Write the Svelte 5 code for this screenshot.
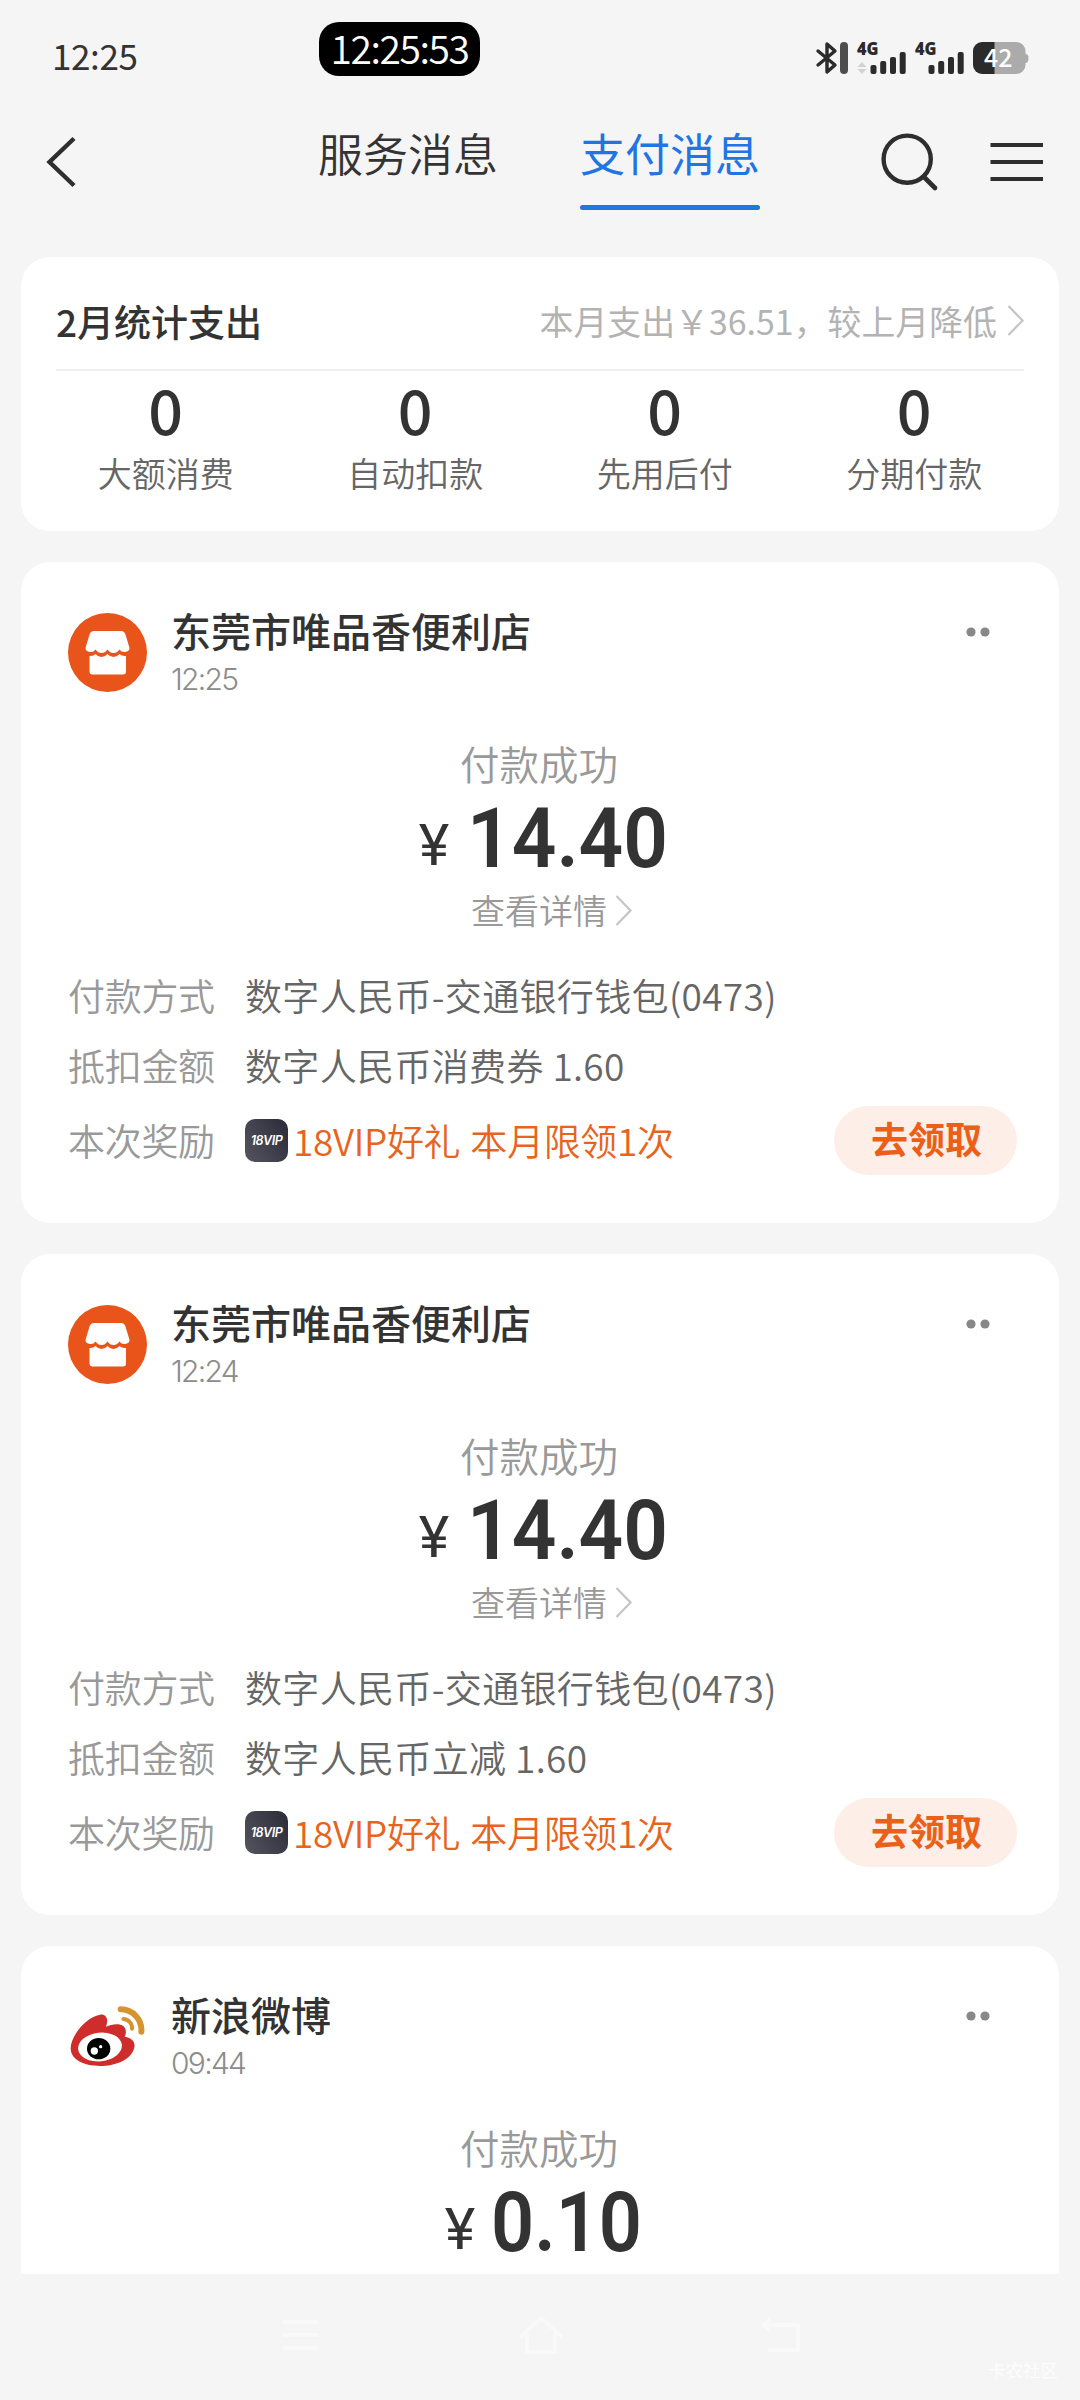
<script lang="ts">
  type Row = { label: string; value: string };
  type Payment = {
    shop: string;
    time: string;
    logo: 'store' | 'weibo';
    amount: string;
    rows: Row[];
    reward?: string;
  };

  const stats = ['大额消费', '自动扣款', '先用后付', '分期付款'];

  const payments: Payment[] = [
    {
      shop: '东莞市唯品香便利店',
      time: '12:25',
      logo: 'store',
      amount: '14.40',
      rows: [
        { label: '付款方式', value: '数字人民币-交通银行钱包(0473)' },
        { label: '抵扣金额', value: '数字人民币消费券 1.60' },
      ],
      reward: '18VIP好礼 本月限领1次',
    },
    {
      shop: '东莞市唯品香便利店',
      time: '12:24',
      logo: 'store',
      amount: '14.40',
      rows: [
        { label: '付款方式', value: '数字人民币-交通银行钱包(0473)' },
        { label: '抵扣金额', value: '数字人民币立减 1.60' },
      ],
      reward: '18VIP好礼 本月限领1次',
    },
    {
      shop: '新浪微博',
      time: '09:44',
      logo: 'weibo',
      amount: '0.10',
      rows: [],
    },
  ];
</script>

{#snippet chevron(cls: string)}
  <svg class={cls} viewBox="0 0 17 31" width="17" height="31">
    <path d="M1.5 1 L15.5 15.5 L1.5 30" fill="none" stroke="currentColor" stroke-width="2.2" />
  </svg>
{/snippet}

{#snippet signal(arrows: boolean)}
  <svg class="signal" viewBox="0 0 50 32" width="50" height="32">
    <text x="0" y="12.5" class="net" textLength="21.5" lengthAdjust="spacingAndGlyphs">4G</text>
    {#if arrows}
      <path d="M0.5 25 L5 20 L9.5 25Z M0.5 27 L5 32 L9.5 27Z" fill="#d2d2d2" />
    {/if}
    <rect x="13.5" y="23" width="6" height="9" rx="2" />
    <rect x="23.2" y="19" width="6" height="13" rx="2" />
    <rect x="33" y="15" width="6" height="17" rx="2" />
    <rect x="42.7" y="10" width="6" height="22" rx="2" />
  </svg>
{/snippet}

<div class="screen">
  <header class="status">
    <span class="clock">12:25</span>
    <span class="pill">12:25:53</span>
    <div class="status-icons">
      <svg class="bluetooth" viewBox="0 0 33 32" width="33" height="32">
        <path d="M2 9 L19 23 L11 30 V2 L19 9 L2 23" fill="none" stroke="#2b2b2b" stroke-width="3.4" stroke-linecap="round" stroke-linejoin="round" />
        <rect x="24" y="0" width="8" height="32" rx="4" fill="#4d4d4d" />
      </svg>
      {@render signal(true)}
      {@render signal(false)}
      <svg class="battery" viewBox="0 0 56 32" width="56" height="32">
        <path d="M9 0 H43.5 A9 9 0 0 1 52.5 9 V12 Q55.5 12 55.5 16 Q55.5 21 52.5 21 V23 A9 9 0 0 1 43.5 32 H9Z" fill="#ababab" />
        <path d="M21.5 0 H9 A9 9 0 0 0 0 9 V23 A9 9 0 0 0 9 32 H21.5Z" fill="#2b2b2b" />
        <text x="11" y="25" class="level" textLength="28.5" lengthAdjust="spacingAndGlyphs">42</text>
      </svg>
    </div>
  </header>

  <nav class="nav">
    <svg class="back" viewBox="0 0 30 50" width="30" height="50">
      <path d="M28 1.5 L3.5 25 L28 48.5" fill="none" stroke="#2e2e2e" stroke-width="4.4" />
    </svg>
    <div class="tabs">
      <span class="tab">服务消息</span>
      <span class="tab active">支付消息</span>
    </div>
    <svg class="search" viewBox="0 0 58 58" width="58" height="58">
      <circle cx="26.2" cy="26.2" r="23.6" fill="none" stroke="#2e2e2e" stroke-width="4.4" />
      <path d="M43 44 L54 55" stroke="#2e2e2e" stroke-width="4.6" stroke-linecap="round" />
    </svg>
    <svg class="menu" viewBox="0 0 53 40" width="53" height="40">
      <path d="M0.5 3 H53 M0.5 20 H53 M0.5 37 H53" stroke="#2e2e2e" stroke-width="4.2" />
    </svg>
  </nav>

  <main class="feed">
    <section class="card summary">
      <div class="summary-head">
        <h2>2月统计支出</h2>
        <span class="month">本月支出￥36.51，较上月降低</span>
        {@render chevron('chev')}
      </div>
      <div class="stats">
        {#each stats as label}
          <div class="stat">
            <strong>0</strong>
            <span>{label}</span>
          </div>
        {/each}
      </div>
    </section>

    {#each payments as p}
      <article class="card payment">
        <div class="shop">
          {#if p.logo === 'store'}
            <svg class="logo" viewBox="0 0 79 79">
              <circle cx="39.5" cy="39.5" r="39.5" fill="#e8541a" />
              <path d="M26 18 H53 Q56.5 18 57.5 21.5 L61.5 35 Q61.5 38.5 57 39 Q53.5 39.5 51.5 36.5 Q49 40 45.5 40 Q42 40 39.5 36.5 Q37 40 33.5 40 Q30 40 27.5 36.5 Q25.5 39.5 22 39 Q17.5 38.5 17.5 35 L21.5 21.5 Q22.5 18 26 18Z" fill="#fff" />
              <path d="M21.5 43 Q25 43.5 27.5 41 Q30 44 33.5 44 Q37 44 39.5 41 Q42 44 45.5 44 Q49 44 51.5 41 Q54 43.5 58 43 V58.5 Q58 61.5 55 61.5 H24.5 Q21.5 61.5 21.5 58.5Z" fill="#fff" />
            </svg>
          {:else}
            <svg class="logo" viewBox="54 51 237 237">
              <path d="M62 205 C62 170 105 112 150 104 C170 102 176 118 168 140 C190 130 222 128 227 150 Q229 162 224 170 C248 174 258 188 252 206 C242 240 195 258 150 258 C100 258 62 238 62 205Z" fill="#cf2c2c" />
              <ellipse cx="150" cy="201" rx="66" ry="43" transform="rotate(-6 150 201)" fill="#fff" />
              <ellipse cx="146" cy="206" rx="35" ry="32" fill="#000" />
              <circle cx="133" cy="213" r="11" fill="#fff" />
              <circle cx="152" cy="200" r="5" fill="#fff" />
              <path d="M212 88 A62 62 0 0 1 274 155" fill="none" stroke="#d6942e" stroke-width="18" stroke-linecap="round" />
              <path d="M220 117 A27 27 0 0 1 246 146" fill="none" stroke="#d6942e" stroke-width="12" stroke-linecap="round" />
            </svg>
          {/if}
          <div class="shop-text">
            <h3>{p.shop}</h3>
            <time>{p.time}</time>
          </div>
          <svg class="more" viewBox="0 0 24 10" width="24" height="10">
            <circle cx="5" cy="5" r="4.6" fill="#888" />
            <circle cx="19" cy="5" r="4.6" fill="#888" />
          </svg>
        </div>

        <p class="result">付款成功</p>
        <p class="amount">
          <span class="yen">¥</span>
          <svg class="digits" width={p.amount.length === 5 ? 196 : 144} height="64">
            <text x={p.amount.length === 5 ? -2 : -4} y="62" textLength={p.amount.length === 5 ? 201 : 151} lengthAdjust="spacingAndGlyphs">{p.amount}</text>
          </svg>
        </p>
        {#if p.rows.length}
          <p class="detail">查看详情{@render chevron('chev')}</p>
        {/if}

        {#each p.rows as row}
          <div class="row">
            <span class="label">{row.label}</span>
            <span class="value">{row.value}</span>
          </div>
        {/each}
        {#if p.reward}
          <div class="row reward">
            <span class="label">本次奖励</span>
            <span class="vip">18VIP</span>
            <span class="gift">{p.reward}</span>
            <button>去领取</button>
          </div>
        {/if}
      </article>
    {/each}
  </main>

  <footer class="system">
    <svg viewBox="0 0 38 32" width="38" height="32">
      <path d="M1 3 H37 M1 16 H37 M1 29 H37" />
    </svg>
    <svg viewBox="0 0 46 40" width="46" height="40">
      <path d="M2 22 L23 3 L44 22 M9 18 V37 H37 V18" />
    </svg>
    <svg viewBox="0 0 38 36" width="38" height="36">
      <path d="M8 2 L2 8 L8 14 M3 8 H36 V33 H6" />
    </svg>
    <span class="watermark">卡农社区</span>
  </footer>
</div>

<style>
  :global(body) {
    background: #f5f5f5;
  }

  .screen {
    display: flex;
    flex-direction: column;
    width: 1080px;
    height: 2400px;
    overflow: hidden;
    background: #f5f5f5;
    color: #333;
    font-family: 'Noto Sans CJK SC', 'Noto Sans', sans-serif;
    font-weight: 350;
  }

  h2,
  h3,
  p {
    margin: 0;
    font-weight: inherit;
  }

  svg {
    display: block;
    flex-shrink: 0;
    overflow: visible;
  }

  /* Status bar */
  .status {
    position: relative;
    display: flex;
    align-items: center;
    justify-content: space-between;
    height: 116px;
    padding: 0 51px 0 52px;
    flex-shrink: 0;
  }

  .clock {
    font-size: 35px;
    line-height: 40px;
    font-weight: 400;
    letter-spacing: -0.4px;
    margin-top: -6px;
  }

  .pill {
    position: absolute;
    left: 319px;
    top: 22px;
    width: 161px;
    height: 54px;
    border-radius: 20px;
    background: #000;
    color: #fff;
    font-size: 39px;
    line-height: 51px;
    letter-spacing: -1.4px;
    text-align: center;
  }

  .status-icons {
    display: flex;
    align-items: center;
  }

  .bluetooth {
    margin-right: 8px;
  }

  .signal {
    margin-right: 8px;
    fill: #2b2b2b;
  }

  .net {
    font: 800 17.5px 'Open Sans', sans-serif;
  }

  .level {
    font: 500 25px 'Noto Sans CJK SC', sans-serif;
    fill: #fff;
  }

  /* Title bar */
  .nav {
    display: flex;
    align-items: flex-start;
    height: 141px;
    padding-left: 46px;
    flex-shrink: 0;
  }

  .back {
    margin-top: 21px;
  }

  .tabs {
    display: flex;
    gap: 82px;
    margin-left: 242px;
  }

  .tab {
    height: 94px;
    box-sizing: border-box;
    padding-top: 6px;
    font-size: 45px;
    line-height: 62px;
  }

  .active {
    display: flex;
    flex-direction: column;
    justify-content: space-between;
    color: #2274e3;
    font-weight: 400;
  }

  .active::after {
    content: '';
    height: 5px;
    border-radius: 3px;
    background: #2274e3;
  }

  .search {
    margin: 17px 0 0 121px;
  }

  .menu {
    margin: 26px 0 0 51px;
  }

  /* Feed */
  .feed {
    display: flex;
    flex-direction: column;
    gap: 31px;
    height: 2017px;
    padding: 0 21px;
    overflow: hidden;
    flex-shrink: 0;
  }

  .card {
    flex-shrink: 0;
    box-sizing: border-box;
    border-radius: 29px;
    background: #fff;
  }

  .summary {
    height: 274px;
    padding: 0 20px;
  }

  .summary-head {
    display: flex;
    align-items: center;
    height: 114px;
    margin: 0 15px;
    padding-top: 15px;
    box-sizing: border-box;
    border-bottom: 2px solid #eee;
  }

  .summary-head h2 {
    font-size: 37px;
    font-weight: 500;
    line-height: 44px;
  }

  .month {
    margin-left: auto;
    font-size: 33.9px;
    line-height: 44px;
    font-weight: 400;
    color: #b3b3b3;
  }

  .chev {
    color: #c4c4c4;
  }

  .summary .chev {
    margin-left: 10px;
  }

  .stats {
    display: grid;
    grid-template-columns: repeat(4, 1fr);
  }

  .stat {
    display: flex;
    flex-direction: column;
    align-items: center;
  }

  .stat strong {
    margin-top: 3px;
    font-size: 61px;
    font-weight: 500;
    line-height: 70px;
  }

  .stat span {
    margin-top: 8px;
    font-size: 34px;
    line-height: 42px;
    color: #666;
  }

  .payment {
    height: 661px;
    padding: 51px 42px 0 47px;
  }

  .shop {
    display: flex;
    height: 79px;
  }

  .logo {
    width: 79px;
    height: 79px;
  }

  .shop-text {
    display: flex;
    flex-direction: column;
    margin: -5px 0 0 24px;
  }

  .shop-text h3 {
    font-size: 40px;
    font-weight: 500;
    line-height: 44px;
  }

  .shop-text time {
    margin-top: 10px;
    font: 300 30px/34px 'Inter', sans-serif;
    letter-spacing: -1.7px;
    color: #8c8c8c;
  }

  .more {
    margin: 14px 27px 0 auto;
  }

  .result {
    margin: 48px 7px 0 0;
    font-size: 39.5px;
    line-height: 46px;
    text-align: center;
    color: #999;
  }

  .amount {
    display: flex;
    justify-content: center;
    align-items: flex-end;
    height: 82px;
    margin-right: 1px;
  }

  .yen {
    font: 400 58px/60px 'Roboto', sans-serif;
    margin: 0 20px -7px 0;
  }

  .digits {
    margin-bottom: -1px;
    font: 600 84px 'Roboto', sans-serif;
    fill: #333;
  }

  .detail {
    display: flex;
    align-items: center;
    justify-content: center;
    gap: 8px;
    height: 44px;
    margin: 20px 0 28px 18px;
    font-size: 34px;
    line-height: 44px;
    color: #999;
  }

  .row {
    display: flex;
    align-items: center;
    height: 70px;
    font-size: 37px;
    line-height: 44px;
  }

  .label {
    width: 148px;
    margin-right: 29px;
    letter-spacing: -0.3px;
    color: #999;
  }

  .value {
    color: #666;
    letter-spacing: 0.35px;
  }

  .reward {
    height: 80px;
  }

  .vip {
    width: 43px;
    height: 43px;
    border-radius: 10px;
    background: linear-gradient(60deg, #55555f, #2b2a38);
    color: #fff;
    font: italic 600 12.5px/43px 'Inter', sans-serif;
    letter-spacing: -0.5px;
    text-align: center;
  }

  .gift {
    margin-left: 5px;
    word-spacing: 2px;
    letter-spacing: -0.3px;
    color: #e8641c;
    white-space: nowrap;
  }

  button {
    width: 183px;
    height: 69px;
    margin-left: auto;
    padding: 0 0 5px 2px;
    border: 0;
    border-radius: 35px;
    background: #fdeee8;
    color: #ec5f17;
    font: 700 37px/44px 'Noto Sans CJK SC', sans-serif;
  }

  /* System navigation */
  .system {
    position: relative;
    display: flex;
    align-items: center;
    height: 126px;
    padding: 0 0 4px 282px;
    gap: 198px;
    box-sizing: border-box;
  }

  .system path {
    fill: none;
    stroke: #f9f9f9;
    stroke-width: 4;
  }

  .watermark {
    position: absolute;
    right: 22px;
    bottom: 17px;
    font-size: 17.5px;
    line-height: 26px;
    font-weight: 400;
    color: #fdfdfd;
  }
</style>
